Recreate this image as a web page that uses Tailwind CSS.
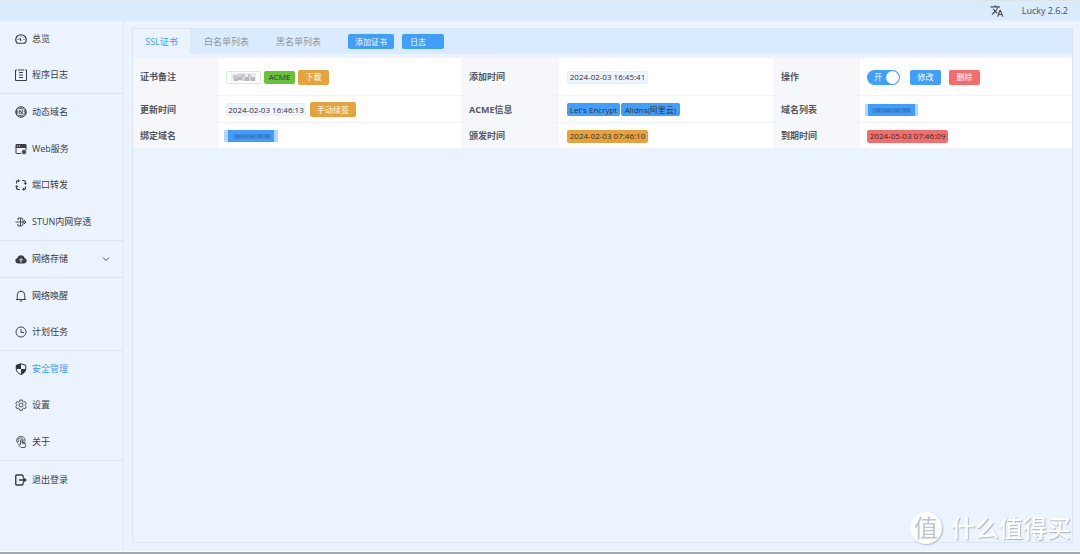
<!DOCTYPE html>
<html lang="zh-CN">
<head>
<meta charset="utf-8">
<meta name="viewport" content="width=device-width, initial-scale=1">
<title>Lucky</title>
<script src="https://cdn.jsdelivr.net/npm/@tailwindcss/browser@4"></script>
</head>
<body class="flex h-screen flex-col border-t border-[#dbe3e6] bg-[#ebf3ff] font-['Open_Sans','Noto_Sans_CJK_SC',sans-serif] text-[9px] leading-3 text-[#303133]">
<header class="flex h-5 shrink-0 items-center justify-end gap-[18px] border-b border-[#e2ebfa] bg-[#d9ebff] pr-3 text-[#484c52]">
  <button aria-label="语言" class="block">
    <svg class="size-[14px]" viewBox="0 0 24 24" fill="currentColor"><path d="M12.87 15.07l-2.54-2.51.03-.03A17.5 17.5 0 0 0 14.07 6H17V4h-7V2H8v2H1v2h11.17C11.5 7.92 10.44 9.75 9 11.35 8.07 10.32 7.3 9.19 6.69 8h-2c.73 1.63 1.73 3.17 2.98 4.56l-5.09 5.02L4 19l5-5 3.11 3.11.76-2.04zM18.5 10h-2L12 22h2l1.12-3h4.75L21 22h2l-4.5-12zm-2.62 7l1.62-4.33L19.12 17h-3.24z"/></svg>
  </button>
  <span>Lucky 2.6.2</span>
</header>

<div class="flex min-h-0 flex-1">
  <nav class="w-[124px] shrink-0 border-r border-[#e0e7f5] text-[#3b3d42]">
    <div class="flex h-[73px] flex-col border-b border-[#dfe6f3]">
      <a href="#" class="flex flex-1 items-center gap-[5px] pl-[15px]">
        <svg class="size-3" viewBox="0 0 24 24" fill="none" stroke="currentColor" stroke-width="2.4"><path d="M4.500 20.500A10.500 10 0 1 1 19.500 20.500Z" stroke-linejoin="round"/><path d="M12 15.500L9.500 10" stroke-width="2.600"/><path d="M12 5v2M5 13h2M17 13h2M16.500 8.500l-1 1" stroke-width="2"/></svg>
        总览</a>
      <a href="#" class="flex flex-1 items-center gap-[5px] pl-[15px]">
        <svg class="size-3" viewBox="0 0 24 24" fill="none" stroke="currentColor" stroke-width="2"><path d="M4 2H1v21h22V2h-3M6 2h12M8 7h8M8 12h8M8 17h8"/></svg>
        程序日志</a>
    </div>
    <div class="flex h-[147px] flex-col border-b border-[#dfe6f3]">
      <a href="#" class="flex flex-1 items-center gap-[5px] pl-[15px]">
        <svg class="size-3" viewBox="0 0 24 24" fill="none" stroke="currentColor"><circle cx="12" cy="12" r="10.500" stroke-width="2"/><path d="M12 1v5M12 18v5M4 5.500h16M4 18.500h16" stroke-width="1.500"/><path d="M3 8.500v7c4 0 4-7 0-7zM9.500 16.500v-8l5 7.500V8M21.500 9h-3v3h3v3.500h-4" stroke-width="1.800"/></svg>
        动态域名</a>
      <a href="#" class="flex flex-1 items-center gap-[5px] pl-[15px]">
        <svg class="size-3" viewBox="0 0 24 24" fill="currentColor"><path fill-rule="evenodd" d="M3 2h18q2 0 2 2v6H1V4q0-2 2-2zm1 3v2h2V5zm4 0v2h2V5z"/><path d="M2 9v11q0 1 1 1h9" fill="none" stroke="currentColor" stroke-width="2"/><path d="M22 9v5" stroke="currentColor" stroke-width="2"/><circle cx="18" cy="18" r="3.500"/><path d="M18 13v10M13 18h10M14.500 14.500l7 7M21.500 14.500l-7 7" stroke="currentColor" stroke-width="1.800"/></svg>
        Web服务</a>
      <a href="#" class="flex flex-1 items-center gap-[5px] pl-[15px]">
        <svg class="size-3" viewBox="0 0 24 24" fill="none" stroke="currentColor" stroke-width="2.400"><path d="M3 9V7q0-4 4-4M14 3h3q4 0 4 4v2M21 15v2q0 4-4 4M10 21H7q-4 0-4-4v-2"/><path d="M6 0l4 3.500-4 3.500zM17 8h7l-3 4zM18 17v7l-4-3.500zM0 16h7l-3-4z" fill="currentColor" stroke="none"/></svg>
        端口转发</a>
      <a href="#" class="flex flex-1 items-center gap-[5px] pl-[15px]">
        <svg class="size-3" viewBox="0 0 24 24" fill="none" stroke="currentColor" stroke-width="1.800"><path d="M1 12h21M18 8l4 4-4 4M6 8V4h6q4 0 4 4v8q0 4-4 4H6v-4M11 4v16"/></svg>
        STUN内网穿透</a>
    </div>
    <div class="flex h-[37px] flex-col border-b border-[#dfe6f3]">
      <a href="#" class="flex flex-1 items-center gap-[5px] pr-[13px] pl-[15px]">
        <svg class="size-3" viewBox="0 0 24 24"><path fill="currentColor" d="M6 21a5.500 5.500 0 0 1-1-10.900 7.200 7.200 0 0 1 14 0A5.500 5.500 0 0 1 18 21z"/><path d="M12 19v-7M8.500 14.500L12 11l3.500 3.500" fill="none" stroke="#ebf3ff" stroke-width="2"/></svg>
        网络存储
        <svg class="ml-auto size-2" viewBox="0 0 16 16" fill="none" stroke="currentColor" stroke-width="1.800"><path d="M2 5l6 6 6-6"/></svg></a>
    </div>
    <div class="flex h-[73px] flex-col border-b border-[#dfe6f3]">
      <a href="#" class="flex flex-1 items-center gap-[5px] pl-[15px]">
        <svg class="size-3" viewBox="0 0 24 24" fill="none" stroke="currentColor" stroke-width="1.900"><path d="M2 19h20M4.500 19v-9a7.500 7.500 0 0 1 15 0v9M12 3V1M9.500 22h5"/></svg>
        网络唤醒</a>
      <a href="#" class="flex flex-1 items-center gap-[5px] pl-[15px]">
        <svg class="size-3" viewBox="0 0 24 24" fill="none" stroke="currentColor" stroke-width="1.900"><circle cx="12" cy="12" r="10"/><path d="M12 6v7h6"/></svg>
        计划任务</a>
    </div>
    <div class="flex h-[110px] flex-col border-b border-[#dfe6f3]">
      <a href="#" aria-current="page" class="flex flex-1 items-center gap-[5px] pl-[15px] text-[#409eff]">
        <svg class="size-3 text-[#303133]" viewBox="0 0 24 24"><path d="M12 1.500l9.500 3V12c0 5-4 9-9.500 11C6.500 21 2.500 17 2.500 12V4.500z" fill="#ebf3ff" stroke="currentColor" stroke-width="2"/><path d="M12 1.500V12H2.500V4.500zM12 12h9.500c0 5-4 9-9.500 11z" fill="currentColor"/></svg>
        安全管理</a>
      <a href="#" class="flex flex-1 items-center gap-[5px] pl-[15px]">
        <svg class="size-3" viewBox="0 0 24 24" fill="none" stroke="currentColor" stroke-width="1.800" stroke-linejoin="round"><path d="M9.500 2h5l.8 3 2 1.200 3-.9 2.200 4-2.200 2.200v1.500l2.200 2.200-2.200 4-3-.9-2 1.200-.8 3h-5l-.8-3-2-1.200-3 .9-2.200-4L3.700 13v-1.500L1.500 9.300l2.200-4 3 .9 2-1.200z"/><circle cx="12" cy="12" r="4"/></svg>
        设置</a>
      <a href="#" class="flex flex-1 items-center gap-[5px] pl-[15px]">
        <svg class="size-3" viewBox="0 0 24 24" fill="none" stroke="currentColor" stroke-width="1.700" stroke-linejoin="round"><path d="M6 15A8.500 8.500 0 1 1 20 11M7.500 12a5 5 0 1 1 8.500-2"/><path d="M11 16V9q0-2 1.500-2T14 9v5l6 1.500q2 .5 1.500 3L20 23h-8l-5-5q1-3 4-1zM14 11q3-1 3 3M17 12q3-1 3 3"/></svg>
        关于</a>
    </div>
    <a href="#" class="flex h-[37px] items-center gap-[5px] pl-[15px]">
      <svg class="size-3" viewBox="0 0 24 24" fill="none" stroke="currentColor" stroke-width="2.800"><path d="M16 7V4q0-2-2-2H3Q1.500 2 1.500 4v16q0 2 1.500 2h11q2 0 2-2v-3M8 12h10"/><path d="M16 6l8 6-8 6z" fill="currentColor" stroke="none"/></svg>
      退出登录</a>
  </nav>

  <main class="flex min-w-0 flex-1 flex-col pt-[7px] pr-[7px] pb-2 pl-2">
    <section class="flex-1 border border-[#dfe6f3]">
      <div class="flex h-[25px] items-stretch bg-[#d9ebff] text-[#909399]">
        <div role="tablist" class="flex">
          <button role="tab" aria-selected="true" class="w-[57px] bg-[#ebf3ff] text-[#409eff]">SSL证书</button>
          <button role="tab" aria-selected="false" class="w-[73px]">白名单列表</button>
          <button role="tab" aria-selected="false" class="w-[71px]">黑名单列表</button>
        </div>
        <div class="ml-[14px] flex items-center gap-2 text-[8px] text-white">
          <button class="h-[15px] w-[46px] rounded-[2px] bg-[#409eff]">添加证书</button>
          <button class="h-[15px] w-[42px] rounded-[2px] bg-[#409eff] pl-2 text-left">日志</button>
        </div>
      </div>

      <table class="mt-1 w-full table-fixed border-collapse bg-white text-left [&_td]:pt-[2px] [&_th]:pt-[2px]">
        <colgroup><col class="w-[86px]"><col class="w-[242px]"><col class="w-[98px]"><col class="w-[214px]"><col class="w-[87px]"><col class="w-[212px]"></colgroup>
        <tbody class="text-[8px]">
          <tr class="h-[37px] border-b border-[#f1f3f8]">
            <th scope="row" class="bg-[#f5f7fa] pl-[7px] text-[9px] font-bold text-[#55585e]">证书备注</th>
            <td class="pl-[7px]">
              <div class="flex items-center gap-[3px]">
                <span class="flex h-[13px] w-[35px] items-center rounded-[2px] border border-[#d8edcf] pl-1">
                  <svg aria-hidden="true" class="h-2 w-[25px]" viewBox="0 0 25 8" shape-rendering="crispEdges"><path fill="#ececec" d="M0 0h25v8H0z"/><path fill="#c9c9cb" d="M2 2h5v3H2zM10 1h4v3h-4zM17 1h3v3h-3z"/><path fill="#b9babd" d="M3 5h4v3H3zM7 4h4v3H7zM14 4h4v4h-4zM20 4h4v4h-4z"/><path fill="#d5d5d7" d="M11 4h3v4h-3zM18 4h2v4h-2zM7 1h3v3H7z"/></svg>
                </span>
                <span class="flex h-[13px] w-[31px] items-center justify-center rounded-[2px] bg-[#67c23a]">ACME</span>
                <button class="h-[15px] w-[31px] rounded-[2px] bg-[#e6a23c] text-white">下载</button>
              </div>
            </td>
            <th scope="row" class="bg-[#f5f7fa] pl-2 text-[9px] font-bold text-[#55585e]">添加时间</th>
            <td class="pl-2"><span class="flex h-[13px] w-[81px] items-center justify-center rounded-[2px] border border-[#e6f1fd] bg-[#ecf5ff] whitespace-nowrap">2024-02-03 16:45:41</span></td>
            <th scope="row" class="bg-[#f5f7fa] pl-2 text-[9px] font-bold text-[#55585e]">操作</th>
            <td class="pl-[7px]">
              <div class="flex items-center gap-2">
                <label class="relative mr-[2px] flex h-[15px] w-[33px] items-center rounded-full bg-[#409eff] pl-[7px] text-white">
                  <input type="checkbox" role="switch" checked class="absolute inset-0 size-full appearance-none">
                  <span>开</span>
                  <span class="mr-px ml-auto size-[13px] rounded-full bg-white"></span>
                </label>
                <button class="h-[15px] w-[31px] rounded-[2px] bg-[#409eff] text-white">修改</button>
                <button class="h-[15px] w-[31px] rounded-[2px] bg-[#f56c6c] text-white">删除</button>
              </div>
            </td>
          </tr>
          <tr class="h-[27px] border-b border-[#f1f3f8]">
            <th scope="row" class="bg-[#f5f7fa] pl-[7px] text-[9px] font-bold text-[#55585e]">更新时间</th>
            <td class="pl-[7px]">
              <div class="flex items-center gap-1">
                <span class="flex h-[13px] w-[80px] items-center justify-center rounded-[2px] border border-[#e6f1fd] bg-[#ecf5ff] whitespace-nowrap">2024-02-03 16:46:13</span>
                <button class="h-[15px] w-[46px] rounded-[2px] bg-[#e6a23c] text-white">手动续签</button>
              </div>
            </td>
            <th scope="row" class="bg-[#f5f7fa] pl-2 text-[9px] font-bold text-[#55585e]">ACME信息</th>
            <td class="pl-2">
              <div class="flex items-center gap-px whitespace-nowrap">
                <span class="flex h-[13px] w-[53px] items-center justify-center rounded-[2px] bg-[#409eff]">Let's Encrypt</span>
                <span class="flex h-[13px] w-[59px] items-center justify-center rounded-[2px] bg-[#409eff]">Alidns(阿里云)</span>
              </div>
            </td>
            <th scope="row" class="bg-[#f5f7fa] pl-2 text-[9px] font-bold text-[#55585e]">域名列表</th>
            <td class="pl-[5px]">
              <svg aria-hidden="true" class="h-3 w-[53px]" viewBox="0 0 53 12" shape-rendering="crispEdges"><path fill="#b3d8ff" d="M0 0h53v12H0z"/><path fill="#409eff" d="M3 0h47v12H3z"/><path fill="#3a8ae0" d="M7 4h39v5H7z"/><path fill="#387dc8" d="M11 4h4v4h-4zM19 5h7v3h-7zM30 5h4v3h-4zM38 4h7v4h-7z"/></svg>
            </td>
          </tr>
          <tr class="h-[26px]">
            <th scope="row" class="bg-[#f5f7fa] pl-[7px] text-[9px] font-bold text-[#55585e]">绑定域名</th>
            <td class="pl-[5px]">
              <svg aria-hidden="true" class="h-3 w-[54px]" viewBox="0 0 54 12" shape-rendering="crispEdges"><path fill="#b3d8ff" d="M0 0h54v12H0z"/><path fill="#409eff" d="M4 0h46v12H4z"/><path fill="#3a8ae0" d="M9 4h38v5H9z"/><path fill="#387dc8" d="M12 5h11v3H12zM26 5h5v3h-5zM34 4h3v4h-3zM41 4h5v4h-5z"/></svg>
            </td>
            <th scope="row" class="bg-[#f5f7fa] pl-2 text-[9px] font-bold text-[#55585e]">颁发时间</th>
            <td class="pl-2"><span class="flex h-[13px] w-[81px] items-center justify-center rounded-[2px] bg-[#e6a23c] whitespace-nowrap">2024-02-03 07:46:10</span></td>
            <th scope="row" class="bg-[#f5f7fa] pl-2 text-[9px] font-bold text-[#55585e]">到期时间</th>
            <td class="pl-[7px]"><span class="flex h-[13px] w-[81px] items-center justify-center rounded-[2px] bg-[#f56c6c] whitespace-nowrap">2024-05-03 07:46:09</span></td>
          </tr>
        </tbody>
      </table>
    </section>
  </main>
</div>
<footer class="h-[3px] shrink-0 border-t border-white bg-[#a5a9ad]"></footer>

<div class="pointer-events-none fixed right-[9px] bottom-[10px] flex items-center gap-[9px] text-[24px] leading-8 text-white">
  <span class="flex size-8 items-center justify-center rounded-full bg-white text-[#bcc5d2] shadow-[1px_1px_2px_#b4bcc8]">值</span>
  <span class="font-medium [text-shadow:1px_1px_1px_#aeb6c2]">什么值得买</span>
</div>
</body>
</html>
